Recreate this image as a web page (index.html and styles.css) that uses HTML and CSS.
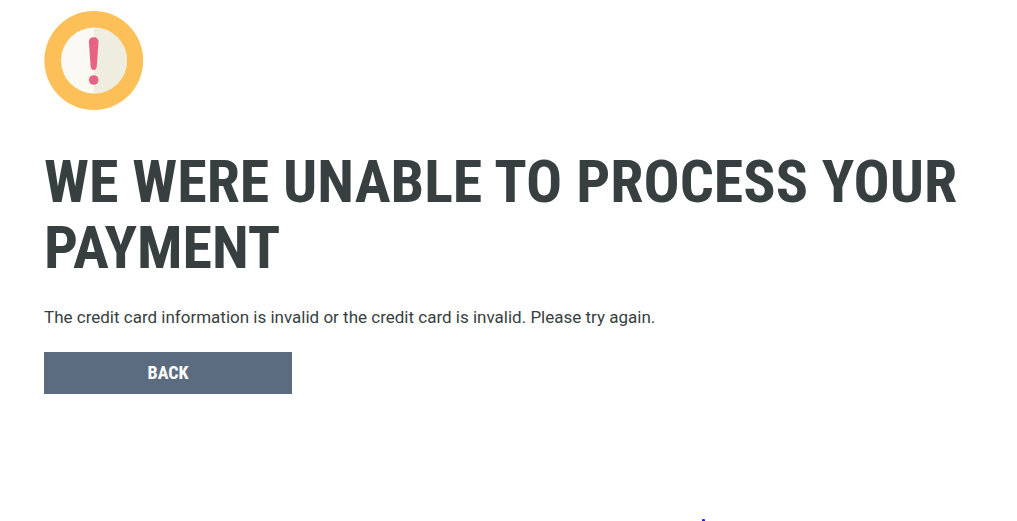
FILE: index.html
```
<!DOCTYPE html>
<html lang="en">
<head>
<meta charset="utf-8">
<title>Payment error</title>
<link rel="stylesheet" href="styles.css">
</head>
<body>
<main class="notice">
  <svg class="notice-icon" viewBox="0 0 100 99" aria-hidden="true">
    <circle cx="49.750" cy="49.5" r="49.400" fill="#fdbf57"/>
    <circle cx="50" cy="49.5" r="33" fill="#faf9f4"/>
    <path d="M50 16.5a33 33 0 0 1 0 66z" fill="#efede0"/>
    <path d="M49.700 26.300c3.200 0 5 2 4.800 5.200l-1.700 23.500c-.2 2.600-1.300 4-3.100 4s-2.900-1.400-3.100-4l-1.700-23.500c-.2-3.200 1.600-5.200 4.800-5.200z" fill="#e76385"/>
    <circle cx="49.700" cy="69" r="4.800" fill="#e76385"/>
  </svg>
  <h1 class="notice-title">We were unable to process your payment</h1>
  <p class="notice-text">The credit card information is invalid or the credit card is invalid. Please try again.</p>
  <button class="notice-button" type="button">Back</button>
</main>
<footer class="footer"><span class="footer-mark"></span></footer>
</body>
</html>
```
FILE: styles.css
```
* { box-sizing: border-box; }
body {
  margin: 0;
  min-height: 100vh;
  display: flex;
  flex-direction: column;
  justify-content: space-between;
  background: #fff;
  color: #373f41;
  font-family: Roboto, "Liberation Sans", sans-serif;
}
.notice { padding: 11px 44px 0; }
.notice-icon { display: block; width: 100px; height: 99px; }
.notice-title {
  margin: 39px 0 0;
  font-family: "Roboto Condensed", "Liberation Sans Narrow", sans-serif;
  font-size: 60px;
  line-height: 66px;
  font-weight: 700;
  text-transform: uppercase;
}
.notice-text { margin: 24px 0 0; font-size: 17px; line-height: 24px; }
.notice-button {
  display: block;
  width: 248px;
  max-width: 100%;
  height: 42px;
  margin: 23px 0 0;
  padding: 0 0 2px;
  border: 0;
  background: #5b6c81;
  color: #fff;
  font-family: "Roboto Condensed", "Liberation Sans Narrow", sans-serif;
  font-size: 18px;
  font-weight: 700;
  text-transform: uppercase;
}
.footer { display: flex; padding-left: 69%; }
.footer-mark { width: 3px; height: 2px; background: #2a18f0; border-radius: 1px 1px 0 0; }
```
